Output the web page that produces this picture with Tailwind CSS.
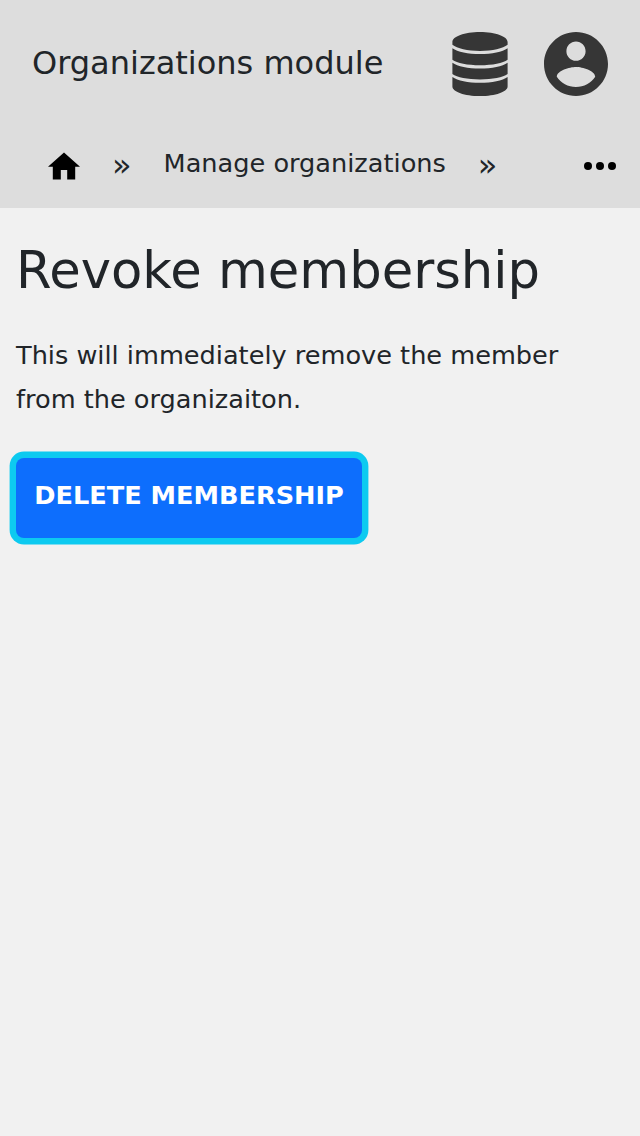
<!DOCTYPE html>
<html lang="en">
<head>
<meta charset="utf-8">
<title>Organizations module</title>
<script src="https://cdn.jsdelivr.net/npm/@tailwindcss/browser@4"></script>
</head>
<body class="min-h-screen bg-[#f1f1f1] text-[#212529] font-['DejaVu_Sans',sans-serif]">
<header class="h-[208px] bg-[#dddddd]">
  <div class="flex h-32 items-center justify-between px-8">
    <span class="text-[32px] leading-[48px] pb-[2px]">Organizations module</span>
    <div class="flex items-center gap-8">
      <svg class="size-16" viewBox="0 0 64 64" fill="#363636"><path d="M4.4 10C4.4 4.5 16.5 0 32 0S59.6 4.5 59.6 10v2.8C55 16.5 44.5 19 32 19S9 16.500 4.400 12.800zM4.400 16.300C9.500 20 20 22.100 32 22.100S54.500 20 59.600 16.300v11.400C55 31 44.500 33.200 32 33.200S9 31 4.400 27.700zM4.400 30.700C9.500 34.300 20 36.500 32 36.500S54.500 34.300 59.600 30.700v11.400C55 45.400 44.500 47.500 32 47.500S9 45.400 4.400 42.100zM4.400 45C9.500 48.700 20 50.800 32 50.800S54.500 48.700 59.600 45v9.400C59.600 59.700 47.500 64 32 64S4.400 59.700 4.400 54.400z"/></svg>
      <svg class="size-16" viewBox="2 2 20 20" fill="#363636"><path d="M12 2C6.48 2 2 6.48 2 12s4.480 10 10 10 10-4.480 10-10S17.520 2 12 2zm0 3c1.660 0 3 1.340 3 3s-1.340 3-3 3-3-1.340-3-3 1.340-3 3-3zm0 14.200c-2.500 0-4.710-1.280-6-3.220.03-1.990 4-3.080 6-3.080 1.990 0 5.970 1.090 6 3.080-1.290 1.940-3.500 3.220-6 3.220z"/></svg>
    </div>
  </div>
  <nav class="flex h-20 items-start text-[25.6px] leading-[38px]">
    <svg class="ml-12 mt-[24px] h-[28px] w-8" viewBox="2 3 20 17"><path d="M10 20v-6h4v6h5v-8h3L12 3 2 12h3v8z"/></svg>
    <span class="ml-8 mt-[18px] text-[32px]">»</span>
    <a class="ml-8 mt-4">Manage organizations</a>
    <span class="ml-8 mt-[18px] text-[32px]">»</span>
    <svg class="ml-auto mr-6 mt-[34px] h-2 w-8" viewBox="0 0 32 8"><circle cx="4" cy="4" r="4"/><circle cx="16" cy="4" r="4"/><circle cx="28" cy="4" r="4"/></svg>
  </nav>
</header>
<main class="px-4 pt-8">
  <h1 class="text-[51.2px] leading-[61px]">Revoke membership</h1>
  <p class="mt-8 text-[25.6px] leading-[44px]">This will immediately remove the member<br>from the organizaiton.</p>
  <button class="mt-[37px] h-20 w-[346px] rounded-lg bg-[#0d6efd] pb-[6px] text-[25.6px] font-bold text-white shadow-[0_0_0_6.4px_#0dcaf0]">DELETE MEMBERSHIP</button>
</main>
</body>
</html>
